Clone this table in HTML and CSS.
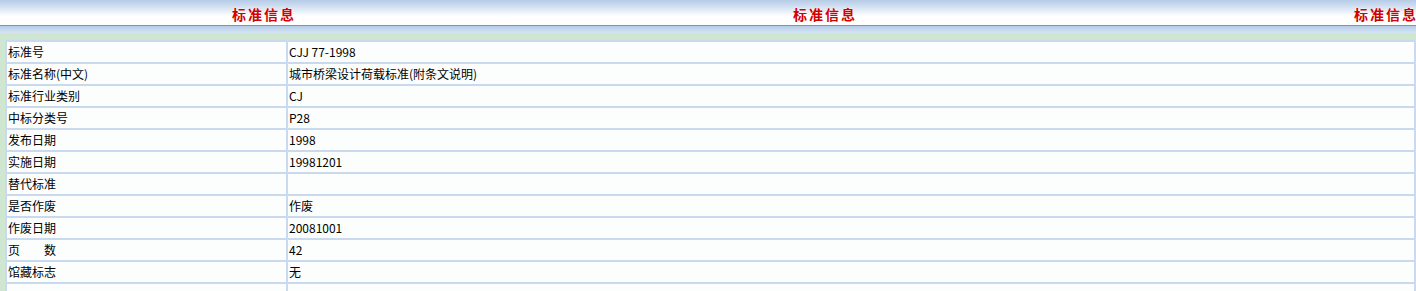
FILE: index.html
```html
<!DOCTYPE html>
<html lang="zh-CN">
<head>
<meta charset="utf-8">
<title>标准信息</title>
<link rel="stylesheet" href="styles.css">
</head>
<body>
<div class="header">
  <div class="titles">
    <span class="title">标准信息</span>
    <span class="title">标准信息</span>
    <span class="title">标准信息</span>
  </div>
</div>
<div class="band"></div>
<div class="content">
  <table class="info">
    <tr><td class="label">标准号</td><td class="value">CJJ 77-1998</td></tr>
    <tr><td class="label">标准名称(中文)</td><td class="value">城市桥梁设计荷载标准(附条文说明)</td></tr>
    <tr><td class="label">标准行业类别</td><td class="value">CJ</td></tr>
    <tr><td class="label">中标分类号</td><td class="value">P28</td></tr>
    <tr><td class="label">发布日期</td><td class="value">1998</td></tr>
    <tr><td class="label">实施日期</td><td class="value">19981201</td></tr>
    <tr><td class="label">替代标准</td><td class="value"></td></tr>
    <tr><td class="label">是否作废</td><td class="value">作废</td></tr>
    <tr><td class="label">作废日期</td><td class="value">20081001</td></tr>
    <tr><td class="label">页　　数</td><td class="value">42</td></tr>
    <tr><td class="label">馆藏标志</td><td class="value">无</td></tr>
    <tr><td class="label"></td><td class="value"></td></tr>
  </table>
</div>
</body>
</html>
```

FILE: styles.css
```css
html, body {
  margin: 0;
  padding: 0;
}
body {
  background: #cfe7d1;
  font-family: "Noto Sans CJK SC", "Liberation Sans", sans-serif;
  font-size: 12px;
  color: #000;
  overflow: hidden;
}
.header {
  height: 25px;
  background: linear-gradient(to bottom, #b5cbe6 0%, #dbe7f4 35%, #ffffff 65%, #ffffff 100%);
  border-bottom: 1px solid #6f97c9;
}
.titles {
  display: flex;
  gap: 497px;
  padding-left: 232px;
  height: 25px;
  align-items: center;
}
.title {
  color: #d20000;
  font-weight: bold;
  font-size: 14px;
  letter-spacing: 2px;
  line-height: 1;
  white-space: nowrap;
  text-shadow: 0 0 2px #fff, 0 0 1px #fff;
  padding-top: 3px;
}
.band {
  height: 7px;
  background: linear-gradient(to bottom, #b4cbe6 0%, #c9dbef 60%, #d6e4f2 100%);
}
.content {
  padding: 7px 0 0 5px;
}
.info {
  width: 100%;
  border-collapse: separate;
  border-spacing: 2px;
  background: #c9d9ee;
  table-layout: fixed;
}
.info td {
  background: #fbfefd;
  height: 20px;
  padding: 0 0 0 1px;
  vertical-align: middle;
  white-space: nowrap;
  line-height: 20px;
}
.info td.label {
  width: 278px;
}
```
